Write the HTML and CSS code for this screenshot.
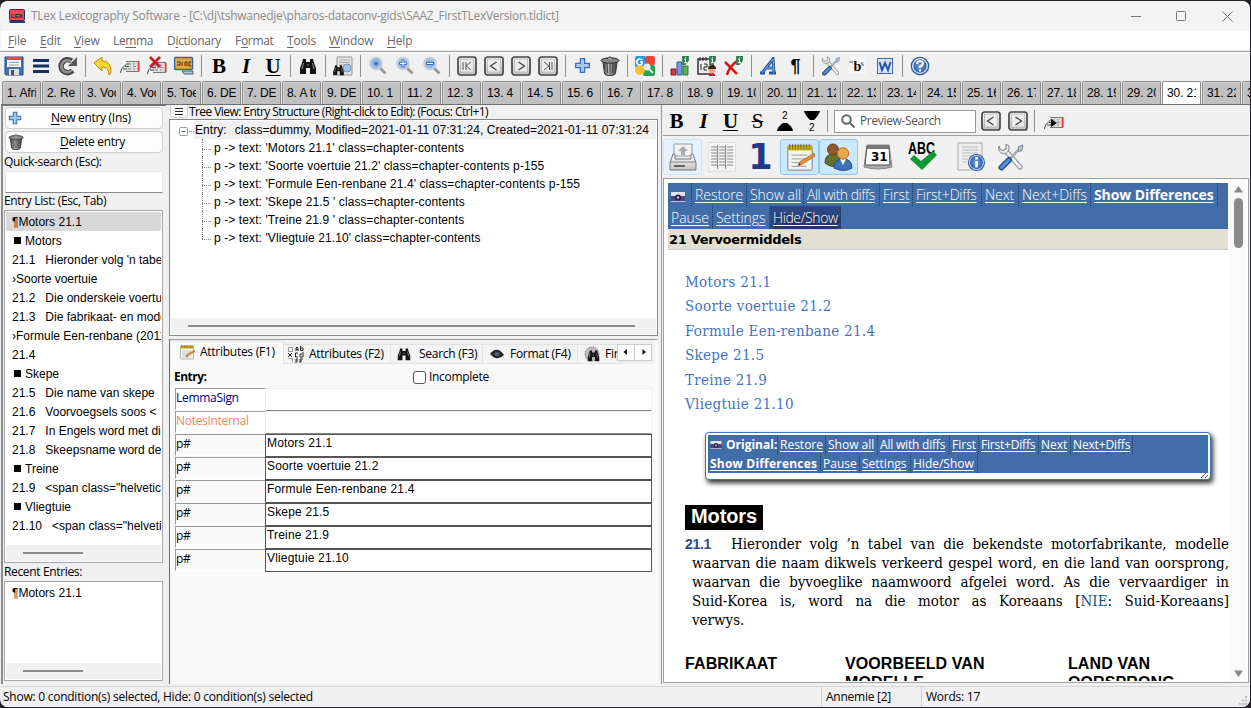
FILE: index.html
```html
<!DOCTYPE html>
<html lang="en">
<head>
<meta charset="utf-8">
<title>TLex Lexicography Software</title>
<link rel="stylesheet" href="styles.css">
</head>
<body>
<svg class="defs" aria-hidden="true">
  <defs>
    <linearGradient id="gGrey" x1="0" y1="0" x2="0" y2="1"><stop offset="0" stop-color="#fdfdfd"/><stop offset="1" stop-color="#c4c4c2"/></linearGradient>
    <linearGradient id="gTrash" x1="0" y1="0" x2="1" y2="0"><stop offset="0" stop-color="#333"/><stop offset=".4" stop-color="#bbb"/><stop offset="1" stop-color="#333"/></linearGradient>
    <radialGradient id="gBlue"><stop offset="0" stop-color="#7aa7dc"/><stop offset="1" stop-color="#2b5ba4"/></radialGradient>
    <symbol id="plus" viewBox="0 0 16 16"><path d="M6 1.500h4V6h4.500v4H10v4.500H6V10H1.500V6H6z" fill="#a6c8f0" stroke="#3c6eb4" stroke-width="1.200"/></symbol>
    <symbol id="trash" viewBox="0 0 20 20"><path d="M3 6h14l-1.500 11.500q-.5 2-5.500 2t-5.500-2z" fill="url(#gTrash)" stroke="#333"/><path d="M7 7l.7 10M10 8v10M13 7l-.7 10" stroke="#444"/><ellipse cx="10" cy="4.500" rx="9" ry="2.700" fill="#888" stroke="#333"/><path d="M7 3q3-4 6 0" fill="#aaa" stroke="#333"/></symbol>
    <symbol id="binoc" viewBox="0 0 18 18"><path d="M4 2h3v3h4V2h3l1 4 2 5v6h-6v-6H7v6H1v-6l2-5z" fill="#151515"/><path d="M4.500 6L3 12M13.500 6l1.500 6M8 8h2" stroke="#8a8a8a"/></symbol>
    <symbol id="card" viewBox="0 0 20 14"><path d="M6 1.500h13v10H6" fill="#ddd" stroke="#777"/><path d="M8 4h3m2 0h2M10 6.500h1m2 0h3M8 9h3m2 0h2" stroke="#888"/><path d="M.5 13l1-4 3-3 2-2h2M3 9h4M5 6.500h4" fill="none" stroke="#444"/><path d="M18.500 2v9" stroke="#f33" stroke-width="1.500"/></symbol>
    <symbol id="mag" viewBox="0 0 20 20"><path d="M11.500 11.500l6 6" stroke="#999" stroke-width="2.800"/><circle cx="8" cy="7.500" r="6" fill="#b9d1ee" stroke="#c5cace" stroke-width="1.500"/><circle cx="8" cy="7.500" r="4.500" fill="#8fb5e3"/></symbol>
    <symbol id="key" viewBox="0 0 20 20"><rect x="1" y="1" width="18" height="18" rx="2.500" fill="url(#gGrey)" stroke="#444" stroke-width="1.700"/><rect x="3.500" y="3" width="13" height="13" fill="#ececec" stroke="#aaa" stroke-width=".7"/></symbol>
    <symbol id="note" viewBox="0 0 32 32"><rect x="3" y="4" width="26" height="26" rx="1.500" fill="#f3f3ef" stroke="#777"/><path d="M3 4h26v5H3z" fill="#c9b016"/><path d="M5 2v6M8 2v6M11 2v6M14 2v6M17 2v6M20 2v6M23 2v6M26 2v6" stroke="#77660a"/><path d="M7 14h17M7 18h16M7 22h11M7 26h16" stroke="#999"/><path d="M14 25l2-4L31 12l1 3-14 9z" fill="#e69138" stroke="#8c561b" stroke-width=".7"/><path d="M14 25l1-2 2 1z" fill="#222"/></symbol>
    <symbol id="tools" viewBox="0 0 28 28"><path d="M9 8l14 16" stroke="#8b8f93" stroke-width="5" stroke-linecap="round"/><path d="M9 8l14 16" stroke="#efefef" stroke-width="3" stroke-linecap="round"/><path d="M2 3q-2 6 5 8 6-2 5-8l-3-2v5l-3 1.500L3 6z" fill="#e6e8ea" stroke="#80868b"/><path d="M25 3L12 17" stroke="#9ba9b8" stroke-width="2.500"/><path d="M21 4l5-2-1 5-3 2z" fill="#b8c7d6" stroke="#7186a0"/><path d="M12 17L4.500 24.500" stroke="#244e8f" stroke-width="6" stroke-linecap="round"/><path d="M12 17L4.500 24.500" stroke="#5d90d1" stroke-width="3" stroke-linecap="round"/></symbol>
    <symbol id="camera" viewBox="0 0 14 10"><path d="M0 0h14v4H0z" fill="#e4e4ee"/><path d="M0 4h14v5H0z" fill="#4b4582"/><circle cx="7" cy="5.500" r="3" fill="#27233f"/><circle cx="7" cy="5.500" r="1.200" fill="#d8c8e8"/><path d="M0 9h14v1H0z" fill="#c9c3d8"/></symbol>
    <symbol id="info" viewBox="0 0 8 8"><path d="M1 0h6v4L4 8H1z" fill="#2f7c4b"/><path d="M4 1v1M3 3h1v3M2.500 6h3" stroke="#fff" fill="none" stroke-width=".9"/></symbol>
  </defs>
</svg>
<div class="window">
  <header class="titlebar">
    <svg class="app-icon" width="16" height="14" viewBox="0 0 16 14"><rect x=".5" y=".5" width="15" height="11" rx="1" fill="#e34b55" stroke="#3c2a4a"/><path d="M0 12h16v2H1z" fill="#26395f"/><text x="2" y="8.500" class="svg-lex">LEX</text></svg>
    <span class="title-text">TLex Lexicography Software - [C:\dj\tshwanedje\pharos-dataconv-gids\SAAZ_FirstTLexVersion.tldict]</span>
    <svg class="win-buttons" width="104" height="14" viewBox="0 0 104 14" fill="none" stroke="#777"><path d="M0 7.500h10M91.500 2.500l10 10m0-10l-10 10"/><rect x="45.500" y="2.500" width="9" height="9" rx="1"/></svg>
  </header>
  <nav class="menubar">
    <span class="m1"><u>F</u>ile</span><span class="m2"><u>E</u>dit</span><span class="m3"><u>V</u>iew</span><span class="m4">Le<u>m</u>ma</span><span class="m5">D<u>i</u>ctionary</span><span class="m6">F<u>o</u>rmat</span><span class="m7"><u>T</u>ools</span><span class="m8"><u>W</u>indow</span><span class="m9"><u>H</u>elp</span>
  </nav>
  <div class="toolbar">
    <i><svg width="20" height="20" viewBox="0 0 20 20"><path d="M1 1h18v18H2l-1-1z" fill="#4473b5" stroke="#234a86"/><path d="M3 1h14v10H3z" fill="#fff"/><path d="M3 1h14v3H3z" fill="#dc4b4b"/><path d="M5 6.500h10M5 9h10" stroke="#999"/><path d="M5 13h10v6H5z" fill="#ddd"/><path d="M7 14h3v5H7z" fill="#456"/></svg></i>
    <i><svg width="18" height="16" viewBox="0 0 18 16"><path d="M1 2.500h16M1 8h16M1 13.500h16" stroke="#12305f" stroke-width="3"/></svg></i>
    <i><svg width="20" height="20" viewBox="0 0 20 20"><path d="M14.500 14.500a6.500 6.500 0 1 1-1-9.500" fill="none" stroke="#444" stroke-width="5.500"/><path d="M14 14a6 6 0 1 1-1-8.500" fill="none" stroke="#929292" stroke-width="2.500"/><path d="M19 1v9h-9z" fill="#5a5a5a"/></svg></i>
    <b class="sep"></b>
    <i><svg width="20" height="20" viewBox="0 0 20 20"><path d="M1 7l8-6v4q9 0 9 10 0 3-2 4 0-8-7-8v4z" fill="#f6d633" stroke="#b58d04"/></svg></i>
    <i><svg class="low" width="20" height="14"><use href="#card"/></svg></i>
    <i><svg width="20" height="19" viewBox="0 0 20 19"><use href="#card" y="5" width="20" height="14"/><path d="M3 1l10 10M13 1L3 11" stroke="#c81e2c" stroke-width="2.800"/></svg></i>
    <i><svg width="20" height="19" viewBox="0 0 20 19"><rect x=".5" y="1.500" width="18" height="12" rx="1" fill="#e9a33b" stroke="#3566aa" stroke-width="1.500"/><path d="M3 6h3v3H3M8 6v4M11 10V6h2v4M15 6h2M15 6v4h2" stroke="#543209" fill="none"/><path d="M8 15h11v3H10z" fill="#b9bec5" stroke="#4c627d"/></svg></i>
    <b class="sep"></b>
    <i class="rich">B</i><i class="rich it">I</i><i class="rich un">U</i>
    <b class="sep"></b>
    <i><svg width="18" height="18"><use href="#binoc"/></svg></i>
    <b class="sep"></b>
    <i><svg width="21" height="20" viewBox="0 0 21 20"><path d="M5 1h15v18H5z" fill="#e3e3e3" stroke="#999"/><path d="M7 4h11M7 6.500h11M7 9h8" stroke="#aaa"/><circle cx="15" cy="12" r="4" fill="#a4c5ef" stroke="#7b96b8"/><use href="#binoc" x="0" y="8" width="13" height="12"/></svg></i>
    <b class="sep"></b>
    <i><svg width="20" height="20"><use href="#mag"/><circle cx="8" cy="7.500" r="2" fill="#3e76c0"/></svg></i>
    <i><svg width="20" height="20"><use href="#mag"/><path d="M4 7.500h8M8 3.500v8" stroke="#3f72b6" stroke-width="2.500"/><path d="M5 7.500h6M8 4.500v6" stroke="#fff"/></svg></i>
    <i><svg width="20" height="20"><use href="#mag"/><path d="M4 7.500h8" stroke="#3f72b6" stroke-width="3"/><path d="M5 7.500h6" stroke="#fff"/></svg></i>
    <b class="sep"></b>
    <i><svg width="20" height="20"><use href="#key"/><path d="M6 6v8M14 6l-5 4 5 4M9 6v8" fill="none" stroke="#555"/></svg></i>
    <i><svg width="20" height="20"><use href="#key"/><path d="M12.500 6l-6 4 6 4" fill="none" stroke="#444" stroke-width="1.300"/></svg></i>
    <i><svg width="20" height="20"><use href="#key"/><path d="M7.500 6l6 4-6 4" fill="none" stroke="#444" stroke-width="1.300"/></svg></i>
    <i><svg width="20" height="20"><use href="#key"/><path d="M14 6v8M6 6l5 4-5 4M11.500 6v8" fill="none" stroke="#555"/></svg></i>
    <b class="sep"></b>
    <i><svg width="17" height="17"><use href="#plus"/></svg></i>
    <i><svg width="20" height="20"><use href="#trash"/></svg></i>
    <b class="sep"></b>
    <i><svg width="20" height="20" viewBox="0 0 20 20"><rect width="11" height="12" rx="2" fill="#2b9adb"/><rect x="10" width="10" height="9" rx="2" fill="#e8463d"/><rect x="8" y="9" width="12" height="11" rx="2" fill="#25a34c"/><circle cx="5" cy="14" r="5" fill="#f4c331"/><path d="M7 4a3 3 0 1 0 0 4v-2H5" stroke="#fff" stroke-width="1.700" fill="none"/><circle cx="12" cy="11" r="3.500" fill="#e9eef4"/><path d="M14 13l4 4" stroke="#e9eef4" stroke-width="2"/></svg></i>
    <b class="sep"></b>
    <i><svg width="20" height="20" viewBox="0 0 20 20"><path d="M1 13h5v6H1z" fill="#d63b3b" stroke="#912"/><path d="M7 6h5v13H7z" fill="#7496e4" stroke="#3457a5"/><path d="M13 10h5v9h-5z" fill="#54b556" stroke="#2a7c2d"/><use href="#info" x="11" y="0" width="9" height="9"/></svg></i>
    <i><svg width="20" height="20" viewBox="0 0 20 20"><rect x="1" y="3" width="15" height="15" fill="#eee" stroke="#333" stroke-width="1.500"/><path d="M3 1v4M6 1v4M9 1v4M4 8v6M7 8h3v3H7v3h3" stroke="#222" fill="none"/><circle cx="15" cy="14" r="3.500" fill="#e9a780"/><path d="M11 13q0-4 4-4t4 4z" fill="#3d211b"/><path d="M12 18h6v2h-6z" fill="#c12"/><use href="#info" x="11" y="0" width="9" height="9"/></svg></i>
    <i><svg width="20" height="20" viewBox="0 0 20 20"><path d="M1 6q5 5 12 12M13 5Q5 11 3 19" stroke="#d91616" stroke-width="2.500" fill="none"/><use href="#info" x="11" y="0" width="9" height="9"/></svg></i>
    <b class="sep"></b>
    <i><svg width="19" height="18" viewBox="0 0 19 18"><path d="M1 16h5M10 16h7M3 16L14 2l1 14M7 11h8" fill="none" stroke="#275796" stroke-width="3"/><path d="M3 16L14 2l1 14M7 11h8" fill="none" stroke="#79a9e4"/></svg></i>
    <i class="pilcrow">¶</i>
    <b class="sep"></b>
    <i><svg width="20" height="20" viewBox="0 0 28 28"><use href="#tools"/></svg></i>
    <i><svg width="17" height="17" viewBox="0 0 17 17"><rect width="17" height="17" rx="1" fill="#f8f8f8"/><text x="4.500" y="14" class="svg-b">b</text><text x="0" y="9" class="svg-q">“</text><text x="11.500" y="9" class="svg-q">s</text></svg></i>
    <i><svg width="16" height="16" viewBox="0 0 16 16"><rect x=".5" y=".5" width="15" height="15" fill="#d5e3f7" stroke="#3c68b2"/><path d="M2.500 4l2.500 8 3-7 3 7 2.500-8" fill="none" stroke="#2857a8" stroke-width="2"/></svg></i>
    <b class="sep"></b>
    <i><svg width="20" height="20" viewBox="0 0 20 20"><circle cx="10" cy="10" r="9.300" fill="#2d5c9e"/><circle cx="10" cy="10" r="7.300" fill="url(#gBlue)" stroke="#e6eef8" stroke-width="1.300"/><path d="M7 8q0-3 3-3t3 2.500q0 1.500-3 3V12M10 13.500v2" fill="none" stroke="#fff" stroke-width="2"/></svg></i>
  </div>
  <div class="tabs">
    <span>1. Afri</span><span>2. Re</span><span>3. Voor</span><span>4. Voor</span><span>5. Toep</span><span>6. DE</span><span>7. DE</span><span>8. A to</span><span>9. DE</span><span>10. 1</span><span>11. 2</span><span>12. 3</span><span>13. 4</span><span>14. 5</span><span>15. 6</span><span>16. 7</span><span>17. 8</span><span>18. 9</span><span>19. 10</span><span>20. 11</span><span>21. 12</span><span>22. 13</span><span>23. 14</span><span>24. 15</span><span>25. 16</span><span>26. 17</span><span>27. 18</span><span>28. 19</span><span>29. 20</span><span class="on">30. 21</span><span>31. 22</span><span>32. 23</span>
  </div>
  <main class="workspace">
    <aside class="left">
      <button class="btn"><svg width="14" height="14"><use href="#plus"/></svg><span class="b1"><u>N</u>ew entry (Ins)</span></button>
      <button class="btn"><svg width="16" height="16"><use href="#trash"/></svg><span class="b2"><u>D</u>elete entry</span></button>
      <label class="lbl l1">Quick-search (Esc):</label>
      <div class="search"></div>
      <label class="lbl l2">Entry List: (Esc, Tab)</label>
      <div class="list entries">
        <div class="rows">
          <p class="sel">¶Motors 21.1</p><p class="sq">Motors</p><p>21.1<s></s>Hieronder volg 'n tabel</p><p>›Soorte voertuie</p><p>21.2<s></s>Die onderskeie voertuie</p><p>21.3<s></s>Die fabrikaat- en model</p><p>›Formule Een-renbane (2011)</p><p>21.4</p><p class="sq">Skepe</p><p>21.5<s></s>Die name van skepe</p><p>21.6<s></s>Voorvoegsels soos &lt;</p><p>21.7<s></s>In Engels word met die</p><p>21.8<s></s>Skeepsname word deur</p><p class="sq">Treine</p><p>21.9<s></s>&lt;span class="helvetica</p><p class="sq">Vliegtuie</p><p>21.10<s></s>&lt;span class="helvetica</p>
        </div>
        <div class="hbar"><b></b></div>
      </div>
      <label class="lbl l3">Recent Entries:</label>
      <div class="list recent">
        <div class="rows"><p>¶Motors 21.1</p></div>
        <div class="hbar"><b></b></div>
      </div>
    </aside>
    <section class="middle">
      <div class="tree-head"><svg width="18" height="13" viewBox="0 0 18 13"><rect x=".5" y="-2" width="17" height="14.500" rx="3" fill="#fdfdfd" stroke="#ccc"/><path d="M5 3.500h8M5 6.500h8M5 9.500h8" stroke="#222"/></svg><span>Tree View: Entry Structure (Right-click to Edit): (Focus: Ctrl+1)</span></div>
      <div class="tree">
        <div class="root"><svg width="15" height="18" viewBox="0 0 15 18"><rect x=".5" y="6.500" width="8" height="8" rx="1" fill="#fff" stroke="#999"/><path d="M2.500 10.500h4" stroke="#36a"/><path d="M10 10.500h5" stroke="#888" stroke-dasharray="1 1"/></svg><span>Entry:<s></s>class=dummy, Modified=2021-01-11 07:31:24, Created=2021-01-11 07:31:24</span></div>
        <div class="kids">
          <p>p -&gt; text: 'Motors 21.1' class=chapter-contents</p><p>p -&gt; text: 'Soorte voertuie 21.2' class=chapter-contents p-155</p><p>p -&gt; text: 'Formule Een-renbane 21.4' class=chapter-contents p-155</p><p>p -&gt; text: 'Skepe 21.5 ' class=chapter-contents</p><p>p -&gt; text: 'Treine 21.9 ' class=chapter-contents</p><p>p -&gt; text: 'Vliegtuie 21.10' class=chapter-contents</p>
        </div>
        <div class="hbar wide"><b></b></div>
      </div>
      <div class="attrs">
        <div class="atabs">
          <span class="t1 on"><svg width="16" height="16"><use href="#note"/></svg><em>Attributes (F1)</em></span>
          <span class="t2"><svg width="16" height="17" viewBox="0 0 16 17" fill="none" stroke="#222"><path d="M.5 1.500h4v4h-4zM.5 12.500h4v4" stroke="#999"/><path d="M0 7l4 4M4 7l-4 4M8 5V2l1-1 1 1v3M8 3.500h2M12.500 0v4.500H15V2h-2M10 7H7.500v4H10M15 6v5h-3V8h2M8 17v-4h2M8 15h2M12 17v-4h3M12 15h2"/></svg><em>Attributes (F2)</em></span>
          <span class="t3"><svg width="14" height="14"><use href="#binoc"/></svg><em>Search (F3)</em></span>
          <span class="t4"><svg width="14" height="10" viewBox="0 0 14 10"><path d="M0 5q7-9 14 1-7 7-14-1z" fill="#1c1c22"/><circle cx="7" cy="5" r="2.500" fill="#4b5470"/><path d="M2 5h10" stroke="#777" stroke-width=".5"/></svg><em>Format (F4)</em></span>
          <span class="t5"><svg width="16" height="16" viewBox="0 0 16 16"><circle cx="8" cy="8" r="7" fill="#bbb" stroke="#666" stroke-dasharray="1 1"/><use href="#binoc" x="3" y="3" width="13" height="13"/></svg><em>Find</em></span>
          <div class="arrows"><svg width="35" height="17" viewBox="0 0 35 17"><rect x=".5" y=".5" width="34" height="16" fill="#fdfdfd" stroke="#ccc"/><path d="M17.500 0v17" stroke="#ccc"/><path d="M10 5v6L6.500 8zM25.500 5v6L29 8z" fill="#111"/></svg></div>
        </div>
        <div class="form">
          <div class="form-top"><strong>Entry:</strong><b class="check"></b><span>Incomplete</span></div>
          <div class="frow"><label class="navy">LemmaSign</label><div></div></div>
          <div class="frow"><label class="coral">NotesInternal</label><div></div></div>
          <div class="frow full"><label>p#</label><div>Motors 21.1</div></div>
          <div class="frow full"><label>p#</label><div>Soorte voertuie 21.2</div></div>
          <div class="frow full"><label>p#</label><div>Formule Een-renbane 21.4</div></div>
          <div class="frow full"><label>p#</label><div>Skepe 21.5</div></div>
          <div class="frow full"><label>p#</label><div>Treine 21.9</div></div>
          <div class="frow full"><label>p#</label><div>Vliegtuie 21.10</div></div>
        </div>
      </div>
    </section>
    <section class="right">
      <div class="rtool">
        <i class="rich">B</i><i class="rich it">I</i><i class="rich un">U</i><i class="rich st">S</i>
        <i><svg width="16" height="20" viewBox="0 0 16 20"><text x="5" y="8" class="svg-two">2</text><path d="M0 20q1-5 6-8h4q5 3 6 8z"/></svg></i>
        <i><svg width="16" height="20" viewBox="0 0 16 20"><path d="M0 0h16q-1 4-6 9H6Q1 4 0 0z"/><text x="5" y="20" class="svg-two">2</text></svg></i>
        <b class="sep"></b>
        <div class="psearch"><svg width="14" height="14" viewBox="0 0 14 14" fill="none" stroke="#666" stroke-width="2"><circle cx="5.500" cy="5.500" r="4.300"/><path d="M8.500 8.500l5 5"/></svg><span>Preview-Search</span></div>
        <i class="k1"><svg width="20" height="20"><use href="#key"/><path d="M12.500 6l-6 4 6 4" fill="none" stroke="#444" stroke-width="1.300"/></svg></i>
        <i><svg width="20" height="20"><use href="#key"/><path d="M7.500 6l6 4-6 4" fill="none" stroke="#444" stroke-width="1.300"/></svg></i>
        <b class="sep"></b>
        <i><svg class="low" width="20" height="14"><use href="#card"/><path d="M7 3l6 4-6 4z"/></svg></i>
      </div>
      <div class="rbig">
        <i class="hot"><svg width="28" height="28" viewBox="0 0 28 28"><path d="M5 1h18v12H5z" fill="#f4f4f4" stroke="#999"/><path d="M14 3l5 5h-3v4h-4V8H9z" fill="#aaa"/><path d="M4 11L1 20v7h26v-7l-3-9h-2v5H6v-5z" fill="url(#gGrey)" stroke="#777"/><path d="M1 19h26" stroke="#888"/><path d="M5 23h11" stroke="#666" stroke-width="2"/></svg></i>
        <i><svg width="28" height="30" viewBox="0 0 28 30"><path d="M.5.5h27v29H.5z" fill="#f4f4f4" stroke="#ddd"/><path d="M3 5h6M3 8h6M3 11h6M3 14h6M3 17h6M3 20h6M3 23h6M11 5h6M11 8h6M11 11h6M11 14h6M11 17h6M11 20h6M11 23h6M19 5h6M19 8h6M19 11h6M19 14h6M19 17h6M19 20h6M19 23h6M9.500 3v24M17.500 3v24" stroke="#888"/></svg></i>
        <i class="one">1</i>
        <i class="hot strong"><svg width="32" height="30"><use href="#note"/></svg></i>
        <i class="hot strong"><svg width="30" height="30" viewBox="0 0 30 30"><path d="M1 21q0-9 8-9t8 9q-7 7-16 0z" fill="#64722c" stroke="#39451a"/><circle cx="9" cy="7.500" r="5.500" fill="#8f5b31" stroke="#63371c"/><path d="M10 26q0-9 9-9t9 9q-8 5-18 0z" fill="#3f73b7" stroke="#204d8b"/><path d="M16 17l3 6 3-6z" fill="#fff"/><circle cx="19" cy="11.500" r="5.700" fill="#eaa452" stroke="#b36c21"/></svg></i>
        <i><svg width="30" height="26" viewBox="0 0 30 26"><path d="M4 1h22l3 22q-14 4-28 0z" fill="#aaa" stroke="#888"/><path d="M4 2h22l1 19H2z" fill="#fafafa" stroke="#555"/><path d="M4 2h22v3H4z" fill="#777"/><text x="8" y="17" class="svg-day">31</text></svg></i>
        <i class="abc"><svg width="32" height="32" viewBox="0 0 32 32"><text x="1" y="13" class="svg-abc" textLength="27" lengthAdjust="spacingAndGlyphs">ABC</text><path d="M3 18l4-4 7 6L26 10l4 4-15 15z" fill="#129632"/></svg></i>
        <i class="doc"><svg width="30" height="30" viewBox="0 0 30 30"><path d="M1 1h24v27H1z" fill="#eee" stroke="#aaa"/><path d="M5 5h16M5 8h16M5 11h16M5 14h13M5 17h6M5 20h5" stroke="#ccc" stroke-width="1.500"/><circle cx="19.500" cy="20.500" r="8.500" fill="#2c5798"/><circle cx="19.500" cy="20.500" r="7" fill="url(#gBlue)" stroke="#d6e3f4"/><path d="M19.500 15v2.500M19.500 19v6.500" stroke="#fff" stroke-width="2.500"/></svg></i>
        <i><svg width="28" height="28"><use href="#tools"/></svg></i>
      </div>
      <div class="preview">
        <div class="page">
          <div class="diff">
            <div><a class="cam"><svg width="14" height="10"><use href="#camera"/></svg></a><a class="d1"><u>Restore</u></a><a class="d2"><u>Show all</u></a><a class="d3"><u>All with diffs</u></a><a class="d4"><u>First</u></a><a class="d5"><u>First+Diffs</u></a><a class="d6"><u>Next</u></a><a class="d7"><u>Next+Diffs</u></a><a class="d8 bold"><u>Show Differences</u></a></div>
            <div><a class="d9"><u>Pause</u></a><a class="d10"><u>Settings</u></a><a class="d11 dark"><u>Hide/Show</u></a></div>
          </div>
          <h1>21 Vervoermiddels</h1>
          <ul class="toc"><li>Motors 21.1</li><li>Soorte voertuie 21.2</li><li>Formule Een-renbane 21.4</li><li>Skepe 21.5</li><li>Treine 21.9</li><li>Vliegtuie 21.10</li></ul>
          <div class="original">
            <div class="orow"><a class="o0 bold"><svg width="12" height="8"><use href="#camera"/></svg><span>Original:</span></a><a class="o1"><u>Restore</u></a><a class="o2"><u>Show all</u></a><a class="o3"><u>All with diffs</u></a><a class="o4"><u>First</u></a><a class="o5"><u>First+Diffs</u></a><a class="o6"><u>Next</u></a><a class="o7"><u>Next+Diffs</u></a></div>
            <div class="orow"><a class="o8 bold"><u>Show Differences</u></a><a class="o9"><u>Pause</u></a><a class="o10"><u>Settings</u></a><a class="o11"><u>Hide/Show</u></a></div>
            <div class="grip"><svg width="8" height="5" viewBox="0 0 8 5"><path d="M1 5l5-5M5 5l3-3" stroke="#555"/></svg></div>
          </div>
          <h2>Motors</h2>
          <div class="para">
            <p class="first"><strong>21.1</strong><span>Hieronder volg ’n tabel van die bekendste motorfabrikante, modelle</span></p>
            <p>waarvan die naam dikwels verkeerd gespel word, en die land van oorsprong,</p>
            <p>waarvan die byvoeglike naamwoord afgelei word. As die vervaardiger in</p>
            <p>Suid-Korea is, word na die motor as Koreaans [<span class="nie">NIE</span>: Suid-Koreaans]</p>
            <p class="last">verwys.</p>
          </div>
          <div class="cols"><span>FABRIKAAT</span><span>VOORBEELD VAN<br>MODELLE</span><span>LAND VAN<br>OORSPRONG</span></div>
        </div>
        <div class="vbar"><svg width="9" height="8" viewBox="0 0 9 8"><path d="M4.500 1L9 7.500H0z" fill="#888"/></svg><b></b><svg class="down" width="9" height="8" viewBox="0 0 9 8"><path d="M4.500 7L9 .5H0z" fill="#888"/></svg></div>
      </div>
    </section>
  </main>
  <footer class="status"><span class="s1">Show: 0 condition(s) selected, Hide: 0 condition(s) selected</span><span class="s2">Annemie [2]</span><span class="s3">Words: 17</span><svg width="10" height="10" viewBox="0 0 10 10"><path d="M7 0h2v2H7zM4 3.500h2v2H4zM7 3.500h2v2H7zM1 7h2v2H1zM4 7h2v2H4zM7 7h2v2H7z" fill="#bbb"/></svg></footer>
</div>
</body>
</html>
```
FILE: styles.css
```css
* { box-sizing: border-box; }
body { margin: 0; width: 1251px; height: 708px; overflow: hidden; background: #252327; font: 12px/16px "Open Sans", "Noto Sans", sans-serif; color: #000; }
p, h1, h2, ul { margin: 0; padding: 0; }
i, em { font-style: normal; }
s { text-decoration: none; }
u { text-underline-offset: 2px; }
svg { display: block; flex: none; }
.defs { width: 0; height: 0; position: absolute; }
.window { width: 1250px; height: 707px; padding: 0 0 0 1px; display: flex; flex-direction: column; background: #f0f0f0; border-radius: 8px; overflow: hidden; border-top: 1px solid #252327; background-clip: padding-box; }

.titlebar { height: 30px; display: flex; align-items: center; background: #f3f3f3; padding-left: 8px; color: #8b8b8b; flex: none; }
.title-text { margin-left: 6px; flex: 1; white-space: nowrap; letter-spacing: -0.28px; }
.win-buttons { margin-right: 15px; }
.svg-lex { font: bold 6px "Liberation Sans", sans-serif; fill: #36131f; }
.menubar { height: 19px; flex: none; background: #fff; border-bottom: 1px solid #f5f5f5; display: flex; color: #666; padding-left: 7px; line-height: 19px; letter-spacing: -0.15px; }
.menubar .m1 { width: 32px; } .menubar .m2 { width: 34px; } .menubar .m3 { width: 39px; } .menubar .m4 { width: 54px; letter-spacing: -0.35px; }
.menubar .m5 { width: 68px; letter-spacing: -0.3px; } .menubar .m6 { width: 52px; letter-spacing: -0.3px; } .menubar .m7 { width: 42px; } .menubar .m8 { width: 58px; }

.toolbar { height: 30px; flex: none; border-top: 1px solid #a0a0a0; display: flex; align-items: center; margin: 1px 0 0 -1px; padding-bottom: 2px; box-shadow: inset 0 1px #fff; }
.toolbar i, .rtool i { width: 27px; display: flex; justify-content: center; align-items: center; flex: none; }
.sep { width: 1px; height: 22px; background: #8e8e8e; margin: 0 3px 0 4px; flex: none; }
.low { margin-top: 3px; }
.rich { font: bold 21px/22px "Liberation Serif", serif; }
.toolbar .rich { padding-left: 1px; }
.rich.it { font-style: italic; }
.rich.un { text-decoration: underline; text-decoration-thickness: 1px; text-underline-offset: 2px; }
.rich.st { text-decoration: line-through; text-decoration-thickness: 1px; font-weight: normal; }
.toolbar .pilcrow { font: bold 18px/20px "Liberation Sans", sans-serif; }
.svg-b { font: bold 14px "Liberation Serif", serif; }
.svg-q { font: bold 9px "Liberation Serif", serif; fill: #777; }

.tabs { height: 24px; flex: none; display: flex; gap: 1px; padding-left: 1px; overflow: hidden; border-bottom: 1px solid #707070; }
.tabs span { flex: none; display: block; width: 39px; height: 23px; background: #c0c0c0; border: 1px solid #8a8a8a; border-bottom: 0; border-radius: 2px 2px 0 0; box-shadow: inset 1px 1px #d4d4d4; font: 12px/23px "Liberation Sans", Arial, sans-serif; white-space: nowrap; overflow: clip; overflow-clip-margin: content-box; padding: 0 4px 0 4px; letter-spacing: -0.1px; }
.tabs .on { background: #fff; box-shadow: none; }

.workspace { flex: none; height: 579px; display: flex; }
.left { width: 165px; flex: none; border-left: 2px solid #8c8c8c; display: flex; flex-direction: column; border-top: 1px solid #777; padding: 1px 0 0 1px; }
.btn { width: 158px; height: 22px; flex: none; margin: 0 0 2px 1px; padding: 0 0 0 2px; background: #fdfdfd; border: 1px solid #cfcfcf; border-radius: 4px; display: flex; align-items: center; font: inherit; letter-spacing: -0.3px; color: inherit; }
.b1 { margin-left: 29px; } .b2 { margin-left: 36px; }
.lbl { white-space: nowrap; flex: none; height: 18px; line-height: 18px; letter-spacing: -0.35px; }
.l1 { height: 16px; line-height: 14px; }
.l2 { height: 17px; line-height: 16px; }
.search { height: 22px; flex: none; width: 158px; margin-left: 1px; background: #fff; border: 1px solid #e8e8e8; border-bottom-color: #888; }
.list { width: 159px; flex: none; background: #fff; border: 1px solid #a6a6ae; padding: 1px; display: flex; flex-direction: column; }
.entries { height: 353px; } .recent { height: 100px; }
.list .rows { flex: 1; min-height: 0; overflow: hidden; font: 12px/19px "Liberation Sans", Arial, sans-serif; white-space: nowrap; letter-spacing: 0; }
.list p { height: 19px; padding-left: 6px; line-height: 20px; overflow: hidden; }
.list .sel { background: #d8d8d8; border-radius: 2px; }
.list s { display: inline-block; width: 10px; }
.list .sq::before { content: ""; display: inline-block; width: 7px; height: 7px; background: #000; margin: 0 4px 1px 2px; }
.hbar { height: 16px; background: #f0f0f0; flex: none; padding: 7px 0 0 17px; }
.hbar b { display: block; height: 2px; width: 60px; background: #8a8a8a; }

.middle { width: 489px; margin-left: 3px; flex: none; display: flex; flex-direction: column; }
.tree-head { height: 14px; display: flex; align-items: center; padding: 0 0 1px 1px; white-space: nowrap; flex: none; }
.tree-head span { letter-spacing: -0.57px; margin-left: 1px; line-height: 12px; }
.tree { height: 217px; flex: none; border: 1px solid #828790; background: #fff; padding: 1px; display: flex; flex-direction: column; font: 12px/18px "Liberation Sans", Arial, sans-serif; white-space: nowrap; letter-spacing: 0.1px; }
.root { display: flex; height: 18px; padding-left: 8px; flex: none; overflow: hidden; letter-spacing: 0.07px; }
.root span { background: #f0f0f0; padding-left: 1px; flex: 1; overflow: hidden; }
.root s { display: inline-block; width: 8px; }
.kids { flex: 1; margin-left: 31px; }
.kids p { height: 18px; padding-left: 12px; position: relative; }
.kids p::before { content: ""; position: absolute; left: 0; top: 0; height: 18px; border-left: 1px dotted #888; }
.kids p:last-child::before { height: 10px; }
.kids p::after { content: ""; position: absolute; left: 0; top: 10px; width: 9px; border-top: 1px dotted #888; }
.hbar.wide b { width: 447px; }
.attrs { flex: 1; margin-top: 3px; border: 1px solid #999; border-left-color: #696969; border-right-color: #fff; border-bottom: 0; background: #f9f9f9; display: flex; flex-direction: column; }
.atabs { height: 24px; padding-left: 1px; display: flex; align-items: flex-end; background: #f0f0f0; flex: none; margin-right: 2px; }
.atabs span { height: 20px; flex: none; display: flex; align-items: center; border: 1px solid #e2e2e2; border-left: 0; padding-left: 4px; background: #f3f3f3; letter-spacing: -0.27px; white-space: nowrap; }
.atabs span.on { background: #f9f9f9; height: 23px; border-bottom: 0; padding: 0 0 3px 8px; }
.atabs em { margin-left: 5px; }
.atabs .t1 { width: 113px; } .atabs .t2 { width: 107px; } .atabs .t3 { width: 92px; padding-left: 6px; } .atabs .t4 { width: 95px; padding-left: 7px; } .atabs .t5 { width: 45px; padding-left: 6px; overflow: hidden; }
.atabs .t3 em { margin-left: 8px; } .atabs .t4 em { margin-left: 6px; }
.arrows { margin: 0 0 3px -6px; position: relative; }
.form { padding: 2px 0 0 5px; }
.form-top { height: 22px; display: flex; align-items: center; letter-spacing: -0.3px; }
.form-top strong { width: 238px; letter-spacing: -0.5px; margin-left: -1px; }
.form-top .check { margin-left: 1px; }
.check { width: 13px; height: 13px; border: 1px solid #555; border-radius: 3px; margin-right: 3px; background: #fff; }
.frow { height: 23px; display: flex; gap: 0; }
.frow label { width: 90px; height: 22px; border: 1px solid #999; border-right: 0; border-bottom-color: #fff; background: #fff; padding-left: 0; line-height: 17px; letter-spacing: -0.3px; }
.frow div { width: 387px; height: 23px; background: #fff; border: 1px solid #eee; border-bottom-color: #888; font: 12px/17px "Liberation Sans", Arial, sans-serif; padding-left: 1px; letter-spacing: 0.17px; }
.frow.full label { background: #f9f9f9; }
.frow.full div { border: 1px solid #555; }
.navy { color: #000080; } .coral { color: #fa8068; }

.right { width: 588px; flex: none; margin-left: 3px; border-left: 1px solid #999; padding-left: 1px; display: flex; flex-direction: column; }
.rtool { height: 31px; border-bottom: 1px solid #a0a0a0; display: flex; align-items: center; flex: none; padding-top: 2px; }
.rtool .sep { margin: 0 6px 0 2px; }
.psearch { width: 142px; height: 23px; border: 1px solid #999; background: #fff; display: flex; align-items: center; gap: 5px; padding-left: 6px; color: #555; letter-spacing: -0.35px; }
.rtool .k1 { margin-left: 1px; }
.rtool .k1 ~ .sep { margin: 0 5px 0 3px; }
.rbig { height: 42px; flex: none; display: flex; align-items: center; }
.rbig i { width: 39px; height: 36px; display: flex; align-items: center; justify-content: center; flex: none; border: 1px solid transparent; border-radius: 3px; }
.rbig .hot { background: #e5f3ff; border-color: #c8e4fa; }
.rbig .strong { background: #cce8ff; border-color: #8cc8f8; }
.rbig .one { font: bold 35px/36px "DejaVu Sans", sans-serif; color: #24388a; }
.rbig .abc { margin-left: 6px; } .rbig .doc { margin-left: 10px; }
.svg-two { font: 10px "Liberation Sans", sans-serif; }
.svg-day { font: bold 12px "DejaVu Sans", sans-serif; }
.svg-abc { font: bold 17px "Liberation Sans", sans-serif; }
.preview { flex: none; height: 505px; width: 586px; border: 1px solid #a0a0a0; background: #fff; display: flex; overflow: hidden; }
.page { width: 566px; padding: 4px 0 0 4px; height: 502px; overflow: hidden; flex: none; }
.vbar { width: 16px; background: #fafafa; display: flex; flex-direction: column; align-items: center; padding: 6px 0 4px; }
.vbar b { width: 9px; height: 50px; border-radius: 5px; background: #8a8a8a; margin-top: 5px; }
.down { margin-top: auto; }
.diff { width: 560px; height: 46px; background: #416da9; color: #fff; font-size: 14px; line-height: 23px; }
.diff div { display: flex; height: 23px; }
.diff a { border-right: 1px dotted #223a5c; padding-left: 3px; white-space: nowrap; flex: none; font-weight: 300; letter-spacing: -0.05px; }
.diff .bold, .original .bold { font-weight: bold; }
.diff .cam { width: 24px; padding: 9px 0 0 3px; }
.diff .d1 { width: 55px; } .diff .d2 { width: 57px; } .diff .d3 { width: 76px; letter-spacing: -0.5px; } .diff .d4 { width: 33px; } .diff .d5 { width: 69px; letter-spacing: -0.2px; } .diff .d6 { width: 37px; } .diff .d7 { width: 72px; letter-spacing: -0.05px; } .diff .d8 { width: 127px; letter-spacing: -0.1px; } .diff .d9 { width: 45px; } .diff .d10 { width: 57px; } .diff .d11 { width: 71px; letter-spacing: -0.4px; }
.diff .dark { background: #2c467f; text-shadow: 1px 2px 2px #111; }
.page h1 { width: 560px; height: 21px; background: #e2dfd3; border-bottom: 1px solid #d0cfd0; font: bold 13px/22px "DejaVu Sans", sans-serif; padding-left: 1px; letter-spacing: -0.3px; }
.toc { list-style: none; margin: 20px 0 0 17px; font: 15px/24.4px "DejaVu Serif Condensed", "DejaVu Serif", serif; font-stretch: condensed; color: #4472c4; letter-spacing: 0.3px; }
.original { margin: 16px 0 0 37px; width: 506px; height: 48px; border: 1px solid #3a75bd; border-radius: 4px; background: #fff; padding: 2px; box-shadow: 2px 3px 5px #333; color: #fff; font-size: 12px; line-height: 18px; }
.orow { display: flex; background: #416da9; height: 19px; }
.orow a { border-right: 1px dotted #223a5c; padding-left: 2px; white-space: nowrap; line-height: 19px; display: flex; }
.o0 { width: 70px; align-items: center; gap: 4px; } .o1 { width: 48px; } .o2 { width: 52px; } .orow .o3 { width: 72px; letter-spacing: -0.2px; } .o4 { width: 29px; } .orow .o5 { width: 60px; letter-spacing: -0.2px; } .o6 { width: 32px; } .orow .o7 { width: 62px; letter-spacing: -0.15px; } .orow .o8 { width: 113px; letter-spacing: 0.2px; } .o9 { width: 39px; } .o10 { width: 51px; } .o11 { width: 67px; }
.grip { display: flex; justify-content: flex-end; }
.page h2 { width: 78px; height: 25px; margin: 25px 0 0 17px; background: #000; color: #fff; font: bold 20px/23px "Liberation Sans", Arial, sans-serif; padding-left: 6px; letter-spacing: -0.1px; }
.para { margin: 5px 0 0 24px; width: 537px; font: 15px/19px "DejaVu Serif Condensed", "DejaVu Serif", serif; font-stretch: condensed; }
.para p { height: 19px; text-align: justify; text-align-last: justify; white-space: nowrap; letter-spacing: -0.02px; }
.para .first { display: flex; margin-left: -7px; }
.para strong { width: 46px; flex: none; color: #2f4b91; font: bold 14px/19px "Liberation Sans", Arial, sans-serif; text-align-last: left; letter-spacing: -0.3px; }
.para .first span { flex: 1; }
.para .last { text-align-last: left; }
.nie { color: #0b4f7c; }
.cols { margin: 24px 0 0 17px; display: grid; grid-template-columns: 160px 223px 1fr; font: bold 16px/19px "Liberation Sans", Arial, sans-serif; letter-spacing: 0.1px; }

.status { flex: 1; border-top: 1px solid #d6d6d6; display: flex; align-items: center; background: #f0f0f0; padding-left: 2px; margin-top: 2px; letter-spacing: -0.25px; }
.status span { height: 20px; line-height: 20px; }
.s1 { width: 818px; } .s2 { width: 100px; border-left: 1px solid #ccc; padding-left: 4px; } .s3 { flex: 1; border-left: 1px solid #ccc; padding-left: 4px; }
.status svg { align-self: flex-end; margin: 0 2px 1px 0; }
```
